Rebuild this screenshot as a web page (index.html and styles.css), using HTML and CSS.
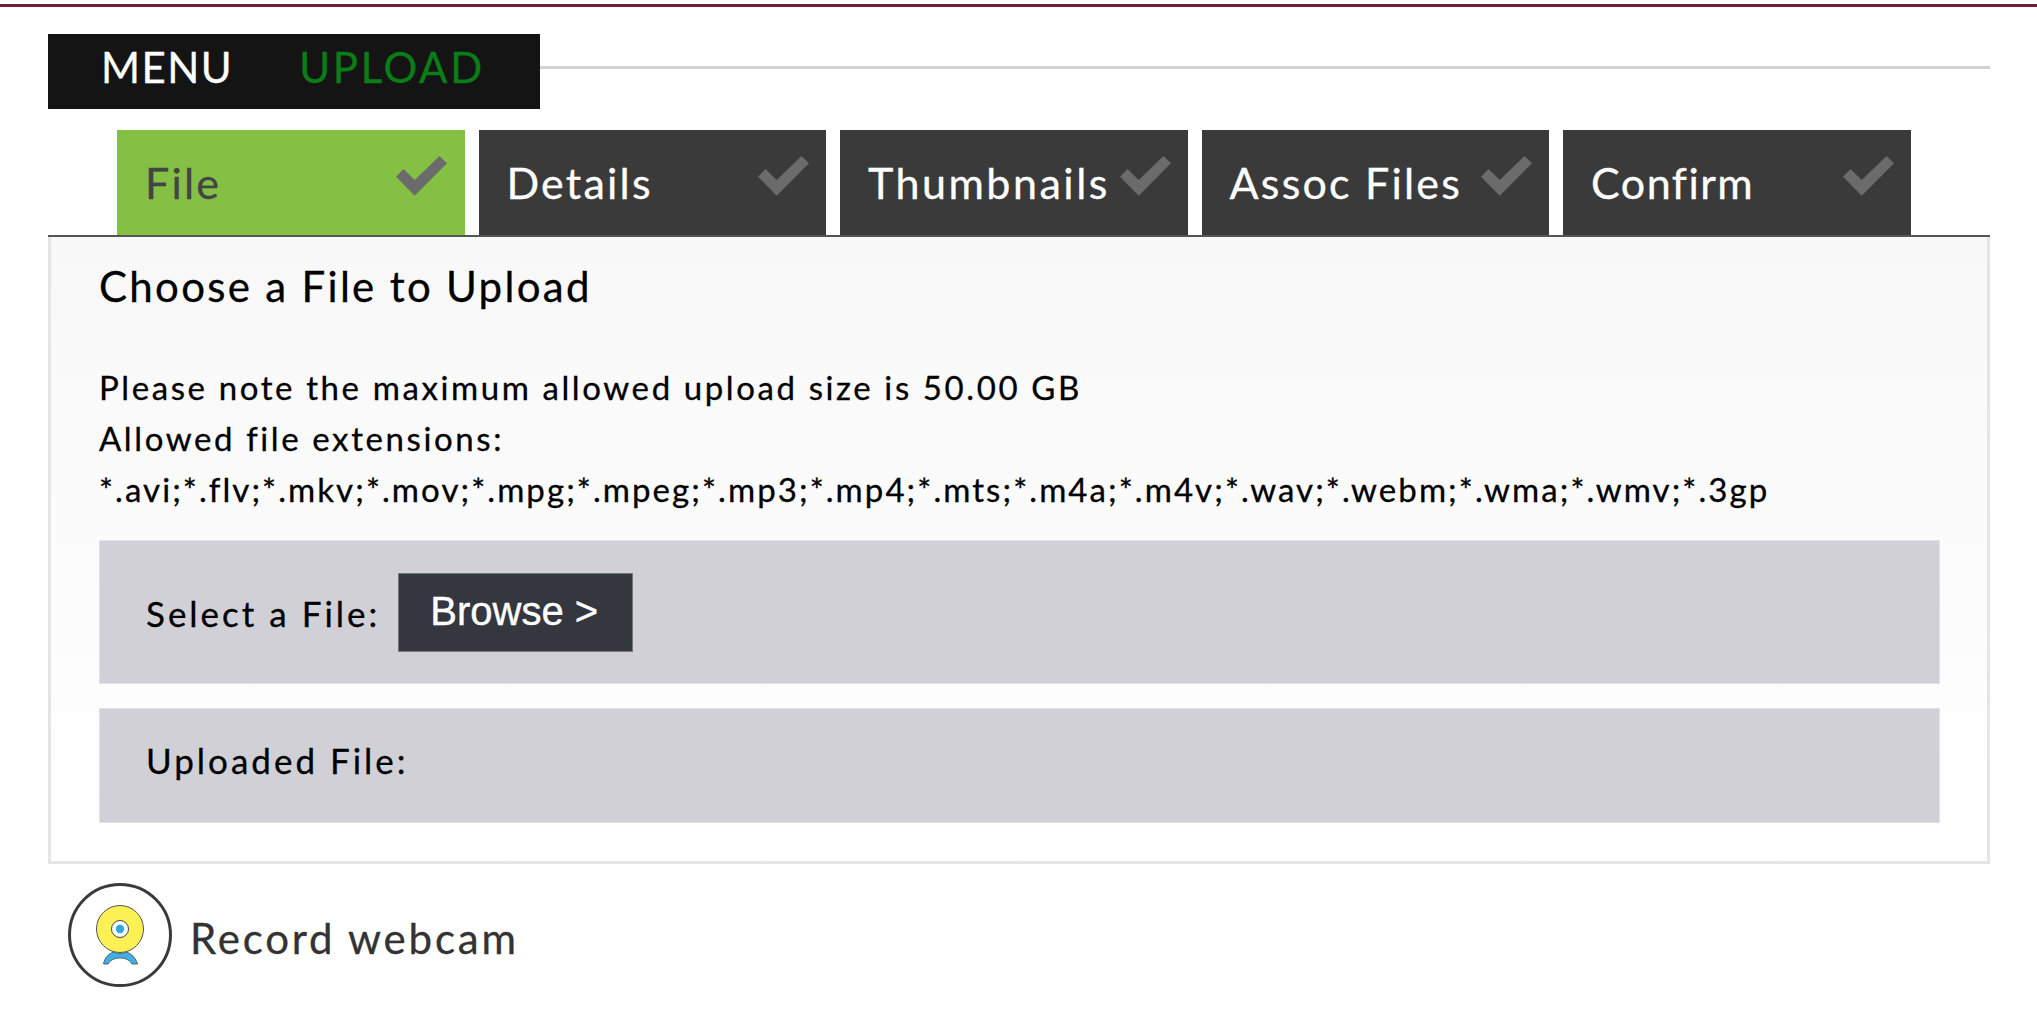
FILE: index.html
```html
<!DOCTYPE html>
<html lang="en">
<head>
<meta charset="utf-8">
<title>Upload</title>
<link rel="stylesheet" href="styles.css">
</head>
<body>
<div class="topline"></div>
<main class="page">
  <header class="head">
    <nav class="menu"><span class="menu-item">MENU</span><span class="menu-item menu-active">UPLOAD</span></nav>
    <div class="rule"></div>
  </header>
  <div class="tabs">
    <div class="tab tab-active"><span>File</span><svg class="check" viewBox="0 0 51 40"><polygon points="0,20.7 7.6,13 18.7,24 43.5,0 51,7.3 18.7,39.7"/></svg></div>
    <div class="tab"><span>Details</span><svg class="check" viewBox="0 0 51 40"><polygon points="0,20.7 7.6,13 18.7,24 43.5,0 51,7.3 18.7,39.7"/></svg></div>
    <div class="tab"><span class="tab-wide">Thumbnails</span><svg class="check" viewBox="0 0 51 40"><polygon points="0,20.7 7.6,13 18.7,24 43.5,0 51,7.3 18.7,39.7"/></svg></div>
    <div class="tab"><span>Assoc Files</span><svg class="check" viewBox="0 0 51 40"><polygon points="0,20.7 7.6,13 18.7,24 43.5,0 51,7.3 18.7,39.7"/></svg></div>
    <div class="tab"><span class="tab-narrow">Confirm</span><svg class="check" viewBox="0 0 51 40"><polygon points="0,20.7 7.6,13 18.7,24 43.5,0 51,7.3 18.7,39.7"/></svg></div>
  </div>
  <section class="panel">
    <h1 class="title">Choose a File to Upload</h1>
    <div class="notes">
      <div>Please note the maximum allowed upload size is 50.00 GB</div>
      <div>Allowed file extensions:</div>
      <div class="exts">*.avi;*.flv;*.mkv;*.mov;*.mpg;*.mpeg;*.mp3;*.mp4;*.mts;*.m4a;*.m4v;*.wav;*.webm;*.wma;*.wmv;*.3gp</div>
    </div>
    <div class="row row-select"><span class="label label-sel">Select a File:</span><button class="browse" type="button">Browse &gt;</button></div>
    <div class="row row-uploaded"><span class="label label-up">Uploaded File:</span></div>
  </section>
  <div class="record">
    <svg class="cam" viewBox="0 0 104 104">
      <circle cx="52" cy="52" r="50.5" fill="#fff" stroke="#3a3a3a" stroke-width="3"/>
      <path d="M35.5 81 C37 73 43 69 47 69 C50 71 54 71 57 69 C61 69 67 73 69.5 81 L64 81 C61 76 56 75 52 75 C48 75 43 76 40 81 Z" fill="#3fb1e5" stroke="#444" stroke-width="0.8"/>
      <circle cx="52" cy="46" r="23.5" fill="#fbf155" stroke="#555" stroke-width="1"/>
      <circle cx="52" cy="46" r="8.5" fill="#fff" stroke="#444" stroke-width="1"/>
      <circle cx="52" cy="46" r="4.2" fill="#2fa8e0"/>
    </svg>
    <span class="record-text">Record webcam</span>
  </div>
</main>
</body>
</html>
```
FILE: styles.css
```css
* { box-sizing: border-box; }
html, body { margin: 0; padding: 0; background: #fff; }
body { font-family: Lato, "Noto Sans", sans-serif; color: #000; -webkit-text-stroke: 0.3px; }
.topline { height: 3px; margin-top: 4px; background: #6b1d3a; }
.page { padding: 0 47px 0 48px; }
.head { display: flex; align-items: center; margin-top: 27px; height: 75px; }
.menu { width: 492px; height: 75px; background: #141414; display: flex; align-items: center; padding: 0 0 9px 53px; gap: 66px; flex: none; }
.menu-item { font-size: 42px; color: #fff; letter-spacing: 1.5px; }
.menu-active { color: #0a7d16; letter-spacing: 2.7px; }
.rule { flex: 1; height: 3px; margin-top: -8px; background: #d2d2d2; }
.tabs { display: flex; gap: 14px; margin-top: 21px; padding-left: 69px; height: 107px; border-bottom: 2px solid #555; }
.tab { width: 347.5px; height: 105px; background: #3a3a3a; color: #fff; font-size: 43px; letter-spacing: 2.2px; display: flex; align-items: center; justify-content: space-between; padding: 0 17px 0 28px; }
.tab-wide { letter-spacing: 2.5px; }
.tab-narrow { letter-spacing: 1.5px; }
.tab-active { background: #84c044; color: #444; }
.tab-active .check { margin-right: 1px; }
.check { width: 51px; height: 40px; flex: none; margin-top: -13px; fill: #6b6b6b; }
.panel { border: 3px solid #e5e5e5; border-top: 0; background: linear-gradient(#f8f8f8, #fff); padding: 24px 47px 39px 48px; height: 627px; }
.title { margin: 0; font-size: 42px; line-height: 50px; font-weight: 400; letter-spacing: 2.3px; }
.notes { margin-top: 51px; font-size: 33px; line-height: 51px; letter-spacing: 2.6px; }
.exts { letter-spacing: 2.07px; }
.row { background: #d1d0d6; border: 1px solid #e3e3e6; display: flex; align-items: center; padding-left: 46px; font-size: 35px; letter-spacing: 3px; }
.row-select { height: 144px; margin-top: 25px; gap: 18px; }
.row-uploaded { height: 115px; margin-top: 24px; }
.label-sel { margin-top: 2px; }
.label-up { margin-top: -11px; }
.browse { width: 235px; height: 79px; background: #34373e; border: 1px solid #777; color: #fff; font-family: "Liberation Sans", Arial, sans-serif; font-size: 40px; letter-spacing: 0; padding: 0 3px 2px 0; border-radius: 0; -webkit-text-stroke: 0.4px #fff; }
.record { display: flex; align-items: center; gap: 18px; margin-top: 19px; margin-left: 20px; }
.cam { width: 104px; height: 104px; flex: none; }
.record-text { font-size: 42px; color: #333; letter-spacing: 2.8px; margin-top: 6px; }
```
